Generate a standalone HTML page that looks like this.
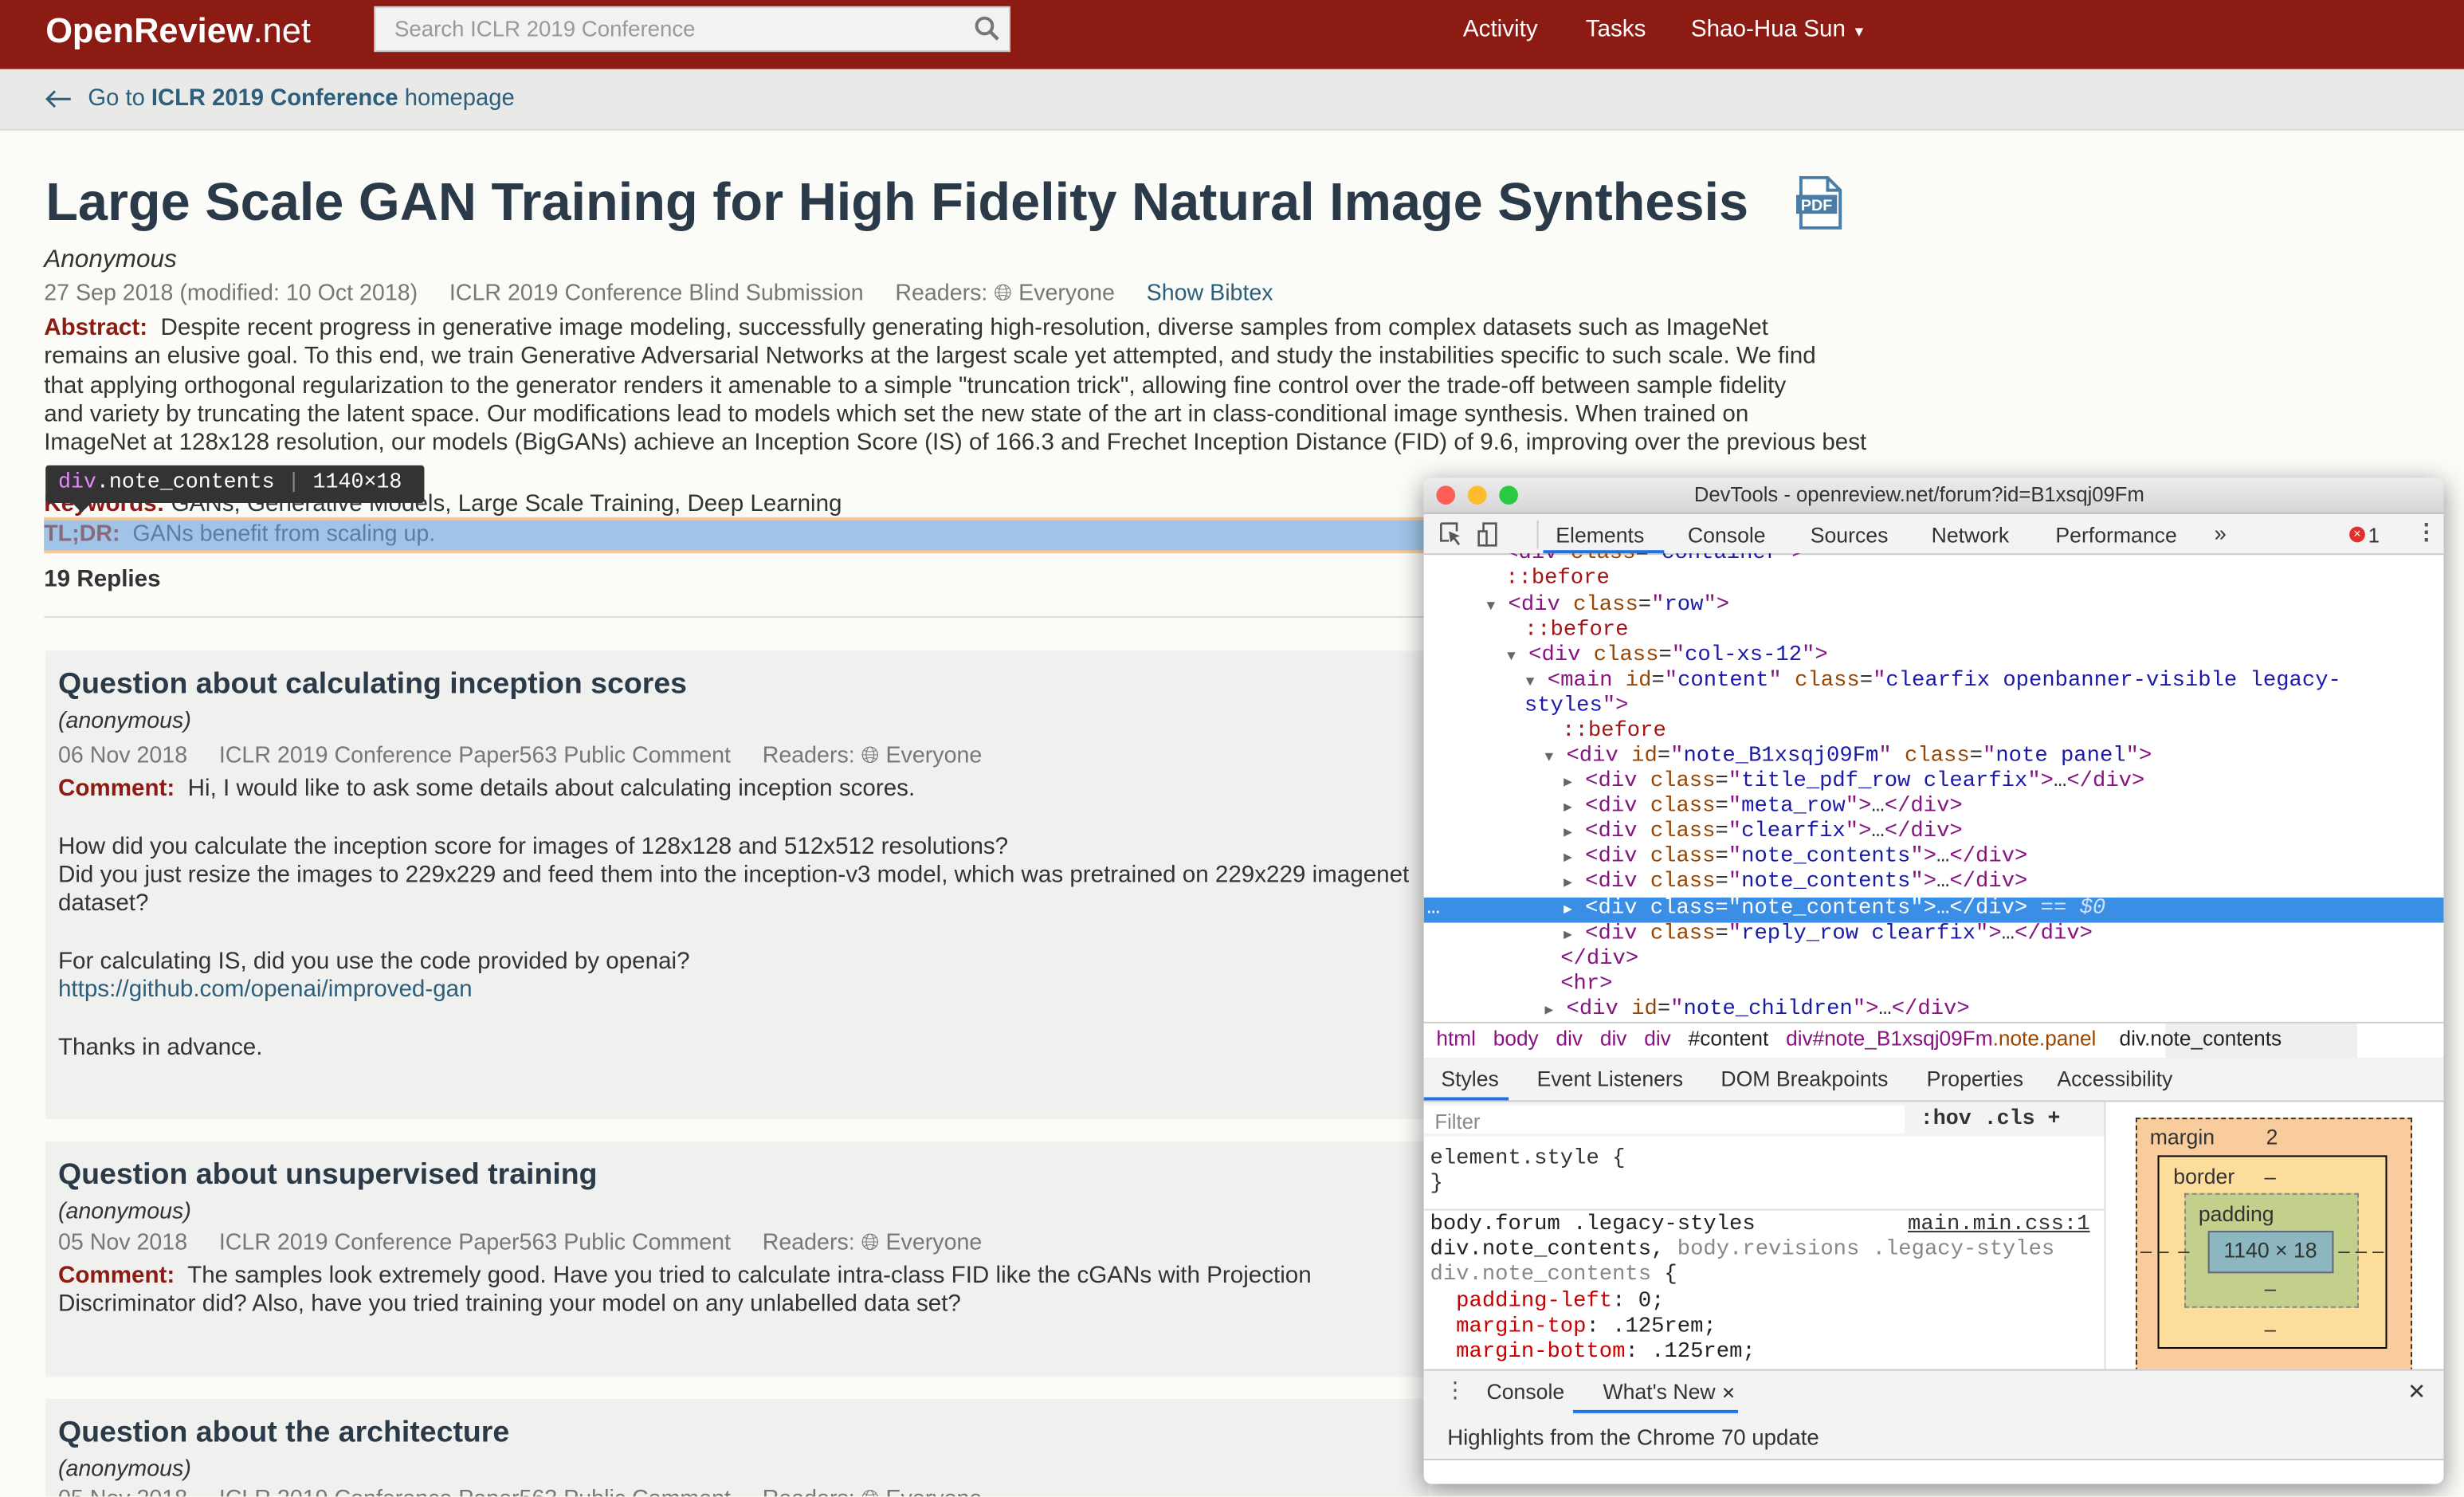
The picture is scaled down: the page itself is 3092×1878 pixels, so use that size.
<!DOCTYPE html>
<html><head><meta charset="utf-8">
<style>
html,body{margin:0;padding:0;width:3092px;height:1878px;overflow:hidden;background:#fbfbf8}
#w{position:absolute;left:0;top:0;width:1568px;height:952px;transform:scale(1.972);transform-origin:0 0;font-family:"Liberation Sans",sans-serif;color:#333;overflow:hidden}
.a{position:absolute;white-space:nowrap}
.mono{font-family:"Liberation Mono","DejaVu Sans Mono",monospace}
.tg{color:#881280}.at{color:#994500}.av{color:#1a1aa6}.pc{color:#a31515}
.dt div.l{position:absolute;left:0;right:0;height:16px;line-height:16px;font-size:13.8px;white-space:nowrap}
.tri{color:#666;font-size:9px}
.tx{font-size:15px;line-height:18.3px;white-space:nowrap}
</style></head><body><div id="w">
<div class="a" style="left:0;top:0;width:1568px;height:44px;background:#8c1b13"></div>
<div class="a" style="left:29px;top:7px;font-size:22px;font-weight:bold;color:#fff">OpenReview<span style="font-weight:normal">.net</span></div>
<div class="a" style="left:238px;top:4px;width:405px;height:29px;background:#f2f2f2;border:1px solid #ccc;box-sizing:border-box"></div>
<div class="a" style="left:251px;top:10px;font-size:14px;color:#999">Search ICLR 2019 Conference</div>
<svg class="a" style="left:620px;top:10px" width="16" height="16" viewBox="0 0 16 16"><circle cx="6.5" cy="6.5" r="5" fill="none" stroke="#777" stroke-width="2"/><line x1="10" y1="10" x2="15" y2="15" stroke="#777" stroke-width="2.2"/></svg>
<div class="a" style="left:931px;top:10px;font-size:15px;color:#fff">Activity</div>
<div class="a" style="left:1009px;top:10px;font-size:15px;color:#fff">Tasks</div>
<div class="a" style="left:1076px;top:10px;font-size:15px;color:#fff">Shao-Hua Sun <span style="font-size:9px">▼</span></div>
<div class="a" style="left:0;top:44px;width:1568px;height:38px;background:#e9e9e8;border-bottom:1px solid #ddd"></div>
<svg class="a" style="left:28px;top:56px" width="18" height="14" viewBox="0 0 18 14"><path d="M17 7H2M7 2L2 7l5 5" fill="none" stroke="#2c5f7c" stroke-width="1.5"/></svg>
<div class="a" style="left:56px;top:55px;font-size:14.8px;color:#2c5f7c">Go to <b>ICLR 2019 Conference</b> homepage</div>
<div class="a" style="left:29px;top:110px;font-size:33.8px;font-weight:bold;color:#2b3a48">Large Scale GAN Training for High Fidelity Natural Image Synthesis</div>
<svg class="a" style="left:1143px;top:112px" width="30" height="34" viewBox="0 0 30 34"><path d="M3 1h17l8 8v24H3z" fill="#fff" stroke="#4a7ca8" stroke-width="2"/><path d="M20 1v8h8" fill="none" stroke="#4a7ca8" stroke-width="2"/><rect x="0" y="12" width="26" height="12" fill="#4a7ca8"/><text x="13" y="22" font-size="10" font-weight="bold" fill="#fff" text-anchor="middle" font-family="Liberation Sans">PDF</text></svg>
<div class="a" style="left:28px;top:157px;font-size:16px;font-style:italic;color:#333">Anonymous</div>
<div class="a" style="left:28px;top:179px;font-size:14.5px;color:#777">27 Sep 2018 (modified: 10 Oct 2018) &nbsp;&nbsp;&nbsp; ICLR 2019 Conference Blind Submission &nbsp;&nbsp;&nbsp; Readers: 🌐︎ Everyone &nbsp;&nbsp;&nbsp; <span style="color:#2c5f7c">Show Bibtex</span></div>
<div class="a tx" style="left:28px;top:200px"><b style="color:#8c1b13">Abstract:</b>&nbsp; Despite recent progress in generative image modeling, successfully generating high-resolution, diverse samples from complex datasets such as ImageNet<br>remains an elusive goal. To this end, we train Generative Adversarial Networks at the largest scale yet attempted, and study the instabilities specific to such scale. We find<br>that applying orthogonal regularization to the generator renders it amenable to a simple "truncation trick", allowing fine control over the trade-off between sample fidelity<br>and variety by truncating the latent space. Our modifications lead to models which set the new state of the art in class-conditional image synthesis. When trained on<br>ImageNet at 128x128 resolution, our models (BigGANs) achieve an Inception Score (IS) of 166.3 and Frechet Inception Distance (FID) of 9.6, improving over the previous best</div>
<div class="a" style="left:28px;top:312px;font-size:15px;color:#333"><b style="color:#8c1b13">Keywords:</b> GANs, Generative Models, Large Scale Training, Deep Learning</div>
<div class="a" style="left:29px;top:296px;height:24px;width:241px;background:#333;border-radius:2px"></div>
<div class="a mono" style="left:37px;top:300px;font-size:13.5px;color:#fff"><span style="color:#e48cff">div</span>.note_contents <span style="color:#888">|</span> 1140×18</div>
<div class="a" style="left:46px;top:320px;width:0;height:0;border-left:6px solid transparent;border-right:6px solid transparent;border-top:6px solid #333"></div>
<div class="a" style="left:28px;top:329px;width:880px;height:23px;background:#f7c898"></div>
<div class="a" style="left:28px;top:331px;width:880px;height:19px;background:#9fc4e7"></div>
<div class="a" style="left:28px;top:332px;font-size:14.5px;color:#5b7da0"><b style="color:#8a6a7a">TL;DR:</b>&nbsp; GANs benefit from scaling up.</div>
<div class="a" style="left:28px;top:360px;font-size:15px;font-weight:bold;color:#333">19 Replies</div>
<div class="a" style="left:28px;top:392px;width:880px;height:1px;background:#ddd"></div>
<div class="a" style="left:29px;top:414px;width:880px;height:298px;background:#f0f0ee"></div>
<div class="a" style="left:37px;top:425px;font-size:19px;font-weight:bold;color:#2b3a48">Question about calculating inception scores</div>
<div class="a" style="left:37px;top:451px;font-size:14.5px;font-style:italic">(anonymous)</div>
<div class="a" style="left:37px;top:473px;font-size:14.5px;color:#777">06 Nov 2018 &nbsp;&nbsp;&nbsp; ICLR 2019 Conference Paper563 Public Comment &nbsp;&nbsp;&nbsp; Readers: 🌐︎ Everyone</div>
<div class="a tx" style="left:37px;top:493px"><b style="color:#8c1b13">Comment:</b>&nbsp; Hi, I would like to ask some details about calculating inception scores.<br><br>How did you calculate the inception score for images of 128x128 and 512x512 resolutions?<br>Did you just resize the images to 229x229 and feed them into the inception-v3 model, which was pretrained on 229x229 imagenet<br>dataset?<br><br>For calculating IS, did you use the code provided by openai?<br><span style="color:#2c5f7c">https://github.com/openai/improved-gan</span><br><br>Thanks in advance.</div>
<div class="a" style="left:29px;top:726px;width:880px;height:150px;background:#f0f0ee"></div>
<div class="a" style="left:37px;top:737px;font-size:19px;font-weight:bold;color:#2b3a48">Question about unsupervised training</div>
<div class="a" style="left:37px;top:763px;font-size:14.5px;font-style:italic">(anonymous)</div>
<div class="a" style="left:37px;top:783px;font-size:14.5px;color:#777">05 Nov 2018 &nbsp;&nbsp;&nbsp; ICLR 2019 Conference Paper563 Public Comment &nbsp;&nbsp;&nbsp; Readers: 🌐︎ Everyone</div>
<div class="a tx" style="left:37px;top:803px"><b style="color:#8c1b13">Comment:</b>&nbsp; The samples look extremely good. Have you tried to calculate intra-class FID like the cGANs with Projection<br>Discriminator did? Also, have you tried training your model on any unlabelled data set?</div>
<div class="a" style="left:29px;top:890px;width:880px;height:70px;background:#f0f0ee"></div>
<div class="a" style="left:37px;top:901px;font-size:19px;font-weight:bold;color:#2b3a48">Question about the architecture</div>
<div class="a" style="left:37px;top:927px;font-size:14.5px;font-style:italic">(anonymous)</div>
<div class="a" style="left:37px;top:946px;font-size:14.5px;color:#777">05 Nov 2018 &nbsp;&nbsp;&nbsp; ICLR 2019 Conference Paper563 Public Comment &nbsp;&nbsp;&nbsp; Readers: 🌐︎ Everyone</div>
<div class="a" style="left:906px;top:304px;width:649px;height:640px;background:#fff;border-radius:5px;box-shadow:0 4px 16px rgba(0,0,0,.45);overflow:hidden">
 <div class="a" style="left:0;top:0;width:649px;height:22px;background:linear-gradient(#ececec,#d6d6d6);border-bottom:1px solid #bbb"></div>
 <div class="a" style="left:8px;top:5px;width:12px;height:12px;border-radius:6px;background:#fc5f57"></div>
 <div class="a" style="left:28px;top:5px;width:12px;height:12px;border-radius:6px;background:#fdbc2e"></div>
 <div class="a" style="left:48px;top:5px;width:12px;height:12px;border-radius:6px;background:#29c941"></div>
 <div class="a" style="left:172px;top:3px;font-size:13px;color:#333">DevTools - openreview.net/forum?id=B1xsqj09Fm</div>
 <div class="a" style="left:0;top:23px;width:649px;height:25px;background:#f3f3f3;border-bottom:1px solid #ccc"></div>
 <svg class="a" style="left:10px;top:28px" width="40" height="16" viewBox="0 0 40 16"><path d="M1 1h10v5M1 1v11h5" fill="none" stroke="#555" stroke-width="1.3"/><path d="M6 6l7 3-3 1 3 4-1 1-3-4-2 2z" fill="#555"/><rect x="28" y="1" width="8" height="14" fill="none" stroke="#555" stroke-width="1.3"/><rect x="25" y="6" width="5" height="9" fill="#f3f3f3" stroke="#555" stroke-width="1.3"/></svg>
 <div class="a" style="left:72px;top:27px;width:1px;height:18px;background:#ccc"></div>
 <div class="a" style="left:84px;top:29px;font-size:13.5px;color:#333">Elements</div>
 <div class="a" style="left:76px;top:46px;width:77px;height:2px;background:#1a73e8"></div>
 <div class="a" style="left:168px;top:29px;font-size:13.5px;color:#333">Console</div>
 <div class="a" style="left:246px;top:29px;font-size:13.5px;color:#333">Sources</div>
 <div class="a" style="left:323px;top:29px;font-size:13.5px;color:#333">Network</div>
 <div class="a" style="left:402px;top:29px;font-size:13.5px;color:#333">Performance</div>
 <div class="a" style="left:503px;top:27px;font-size:14px;color:#333">»</div>
 <div class="a" style="left:589px;top:31px;width:10px;height:10px;border-radius:5px;background:#e0312f;color:#fff;font-size:8px;line-height:10px;text-align:center">×</div>
 <div class="a" style="left:601px;top:29px;font-size:13px;color:#333">1</div>
 <div class="a" style="left:631px;top:26px;font-size:14px;color:#555;font-weight:bold">⋮</div>
 <div class="dt mono a" style="left:0;top:48px;width:649px;height:298px;overflow:hidden">
  <div class="l" style="top:-7px;padding-left:52px"><span class="tg">&lt;div</span> <span class="at">class</span>=<span class="av">"container"</span><span class="tg">&gt;</span></div>
  <div class="l" style="top:9px;padding-left:52px"><span class="pc">::before</span></div>
  <div class="l" style="top:26px;padding-left:40px"><span class="tri">▼</span> <span class="tg">&lt;div</span> <span class="at">class</span>=<span class="tg">"</span><span class="av">row</span><span class="tg">"&gt;</span></div>
  <div class="l" style="top:42px;padding-left:64px"><span class="pc">::before</span></div>
  <div class="l" style="top:58px;padding-left:53px"><span class="tri">▼</span> <span class="tg">&lt;div</span> <span class="at">class</span>=<span class="tg">"</span><span class="av">col-xs-12</span><span class="tg">"&gt;</span></div>
  <div class="l" style="top:74px;padding-left:65px"><span class="tri">▼</span> <span class="tg">&lt;main</span> <span class="at">id</span>=<span class="tg">"</span><span class="av">content</span><span class="tg">"</span> <span class="at">class</span>=<span class="tg">"</span><span class="av">clearfix openbanner-visible legacy-</span></div>
  <div class="l" style="top:90px;padding-left:64px"><span class="av">styles</span><span class="tg">"&gt;</span></div>
  <div class="l" style="top:106px;padding-left:88px"><span class="pc">::before</span></div>
  <div class="l" style="top:122px;padding-left:77px"><span class="tri">▼</span> <span class="tg">&lt;div</span> <span class="at">id</span>=<span class="tg">"</span><span class="av">note_B1xsqj09Fm</span><span class="tg">"</span> <span class="at">class</span>=<span class="tg">"</span><span class="av">note panel</span><span class="tg">"&gt;</span></div>
  <div class="l" style="top:138px;padding-left:89px"><span class="tri">▶</span> <span class="tg">&lt;div</span> <span class="at">class</span>=<span class="tg">"</span><span class="av">title_pdf_row clearfix</span><span class="tg">"&gt;</span>…<span class="tg">&lt;/div&gt;</span></div>
  <div class="l" style="top:154px;padding-left:89px"><span class="tri">▶</span> <span class="tg">&lt;div</span> <span class="at">class</span>=<span class="tg">"</span><span class="av">meta_row</span><span class="tg">"&gt;</span>…<span class="tg">&lt;/div&gt;</span></div>
  <div class="l" style="top:170px;padding-left:89px"><span class="tri">▶</span> <span class="tg">&lt;div</span> <span class="at">class</span>=<span class="tg">"</span><span class="av">clearfix</span><span class="tg">"&gt;</span>…<span class="tg">&lt;/div&gt;</span></div>
  <div class="l" style="top:186px;padding-left:89px"><span class="tri">▶</span> <span class="tg">&lt;div</span> <span class="at">class</span>=<span class="tg">"</span><span class="av">note_contents</span><span class="tg">"&gt;</span>…<span class="tg">&lt;/div&gt;</span></div>
  <div class="l" style="top:202px;padding-left:89px"><span class="tri">▶</span> <span class="tg">&lt;div</span> <span class="at">class</span>=<span class="tg">"</span><span class="av">note_contents</span><span class="tg">"&gt;</span>…<span class="tg">&lt;/div&gt;</span></div>
  <div class="l" style="top:219px;padding-left:89px;background:#3a8ee6;color:#fff"><span style="position:absolute;left:2px">…</span><span style="font-size:9px">▶</span> &lt;div class="note_contents"&gt;…&lt;/div&gt; <span style="color:#cfe0f7">== <i>$0</i></span></div>
  <div class="l" style="top:235px;padding-left:89px"><span class="tri">▶</span> <span class="tg">&lt;div</span> <span class="at">class</span>=<span class="tg">"</span><span class="av">reply_row clearfix</span><span class="tg">"&gt;</span>…<span class="tg">&lt;/div&gt;</span></div>
  <div class="l" style="top:251px;padding-left:87px"><span class="tg">&lt;/div&gt;</span></div>
  <div class="l" style="top:267px;padding-left:87px"><span class="tg">&lt;hr&gt;</span></div>
  <div class="l" style="top:283px;padding-left:77px"><span class="tri">▶</span> <span class="tg">&lt;div</span> <span class="at">id</span>=<span class="tg">"</span><span class="av">note_children</span><span class="tg">"&gt;</span>…<span class="tg">&lt;/div&gt;</span></div>
 </div>
 <div class="a" style="left:0;top:346px;width:649px;height:22px;background:#fff;border-top:1px solid #ccc;border-bottom:1px solid #ccc"></div>
 <div class="a" style="left:472px;top:347px;width:122px;height:22px;background:#eee"></div>
 <div class="a" style="left:8px;top:349px;font-size:13.3px;color:#881280">html &nbsp; body &nbsp; div &nbsp; div &nbsp; div &nbsp; <span style="color:#222">#content</span> &nbsp; div#note_B1xsqj09Fm<span style="color:#994500">.note.panel</span> &nbsp;&nbsp; <span style="color:#222">div.note_contents</span></div>
 <div class="a" style="left:0;top:369px;width:649px;height:27px;background:#f3f3f3;border-bottom:1px solid #ccc"></div>
 <div class="a" style="left:11px;top:375px;font-size:13.5px;color:#333">Styles</div>
 <div class="a" style="left:0;top:394px;width:54px;height:2px;background:#1a73e8"></div>
 <div class="a" style="left:72px;top:375px;font-size:13.5px;color:#333">Event Listeners</div>
 <div class="a" style="left:189px;top:375px;font-size:13.5px;color:#333">DOM Breakpoints</div>
 <div class="a" style="left:320px;top:375px;font-size:13.5px;color:#333">Properties</div>
 <div class="a" style="left:403px;top:375px;font-size:13.5px;color:#333">Accessibility</div>
 <div class="a" style="left:0;top:397px;width:433px;height:22px;background:#f3f3f3"></div>
 <div class="a" style="left:0;top:399px;width:306px;height:18px;background:#fff"></div>
 <div class="a" style="left:7px;top:402px;font-size:13px;color:#888">Filter</div>
 <div class="a mono" style="left:316px;top:401px;font-size:13.5px;color:#333;font-weight:bold">:hov .cls +</div>
 <div class="a" style="left:433px;top:397px;width:1px;height:170px;background:#ddd"></div>
 <div class="a mono" style="left:4px;top:426px;font-size:13.8px;line-height:16px;color:#333">element.style {<br>}</div>
 <div class="a" style="left:0;top:465px;width:433px;height:1px;background:#ddd"></div>
 <div class="a mono" style="left:4px;top:468px;font-size:13.8px;line-height:16.2px;color:#222">body.forum .legacy-styles<br>div.note_contents, <span style="color:#888">body.revisions .legacy-styles</span><br><span style="color:#888">div.note_contents</span> {<br>&nbsp;&nbsp;<span style="color:#c80000">padding-left</span>: 0;<br>&nbsp;&nbsp;<span style="color:#c80000">margin-top</span>: .125rem;<br>&nbsp;&nbsp;<span style="color:#c80000">margin-bottom</span>: .125rem;</div>
 <div class="a mono" style="left:308px;top:468px;font-size:13.8px;color:#333;text-decoration:underline">main.min.css:1</div>
 <div class="a" style="left:453px;top:407px;width:174px;height:165px;background:#f9cc9d;border:1px dashed #333"></div>
 <div class="a" style="left:462px;top:412px;font-size:13.5px">margin</div><div class="a" style="left:536px;top:412px;font-size:13.5px">2</div>
 <div class="a" style="left:467px;top:431px;width:144px;height:121px;background:#fddd9b;border:1.5px solid #000"></div>
 <div class="a" style="left:477px;top:437px;font-size:13.5px">border</div><div class="a" style="left:535px;top:437px;font-size:13px">–</div>
 <div class="a" style="left:484px;top:455px;width:109px;height:71px;background:#c3d08b;border:1px dashed #888"></div>
 <div class="a" style="left:493px;top:461px;font-size:13.5px">padding</div>
 <div class="a" style="left:499px;top:479px;width:78px;height:25px;background:#8cb6c0;border:1px solid #667"></div>
 <div class="a" style="left:509px;top:484px;font-size:13.5px">1140 × 18</div>
 <div class="a" style="left:535px;top:508px;font-size:13px">–</div>
 <div class="a" style="left:535px;top:534px;font-size:13px">–</div>
 <div class="a" style="left:456px;top:484px;font-size:13px">– –</div><div class="a" style="left:480px;top:484px;font-size:13px">–</div>
 <div class="a" style="left:582px;top:484px;font-size:13px">– – –</div>
 <div class="a" style="left:0;top:567px;width:649px;height:28px;background:#f3f3f3;border-top:1px solid #ccc;border-bottom:1px solid #ccc"></div>
 <div class="a" style="left:13px;top:572px;font-size:14px;color:#555">⋮</div>
 <div class="a" style="left:40px;top:574px;font-size:13.5px;color:#333">Console</div>
 <div class="a" style="left:114px;top:574px;font-size:13.5px;color:#333">What's New <span style="font-size:11px">✕</span></div>
 <div class="a" style="left:95px;top:593px;width:105px;height:2px;background:#1a73e8"></div>
 <div class="a" style="left:626px;top:573px;font-size:14px;color:#333">✕</div>
 <div class="a" style="left:0;top:596px;width:649px;height:28px;background:#f3f3f3;border-bottom:1px solid #ccc"></div>
 <div class="a" style="left:15px;top:602px;font-size:14px;color:#333">Highlights from the Chrome 70 update</div>
</div>
</div></body></html>
